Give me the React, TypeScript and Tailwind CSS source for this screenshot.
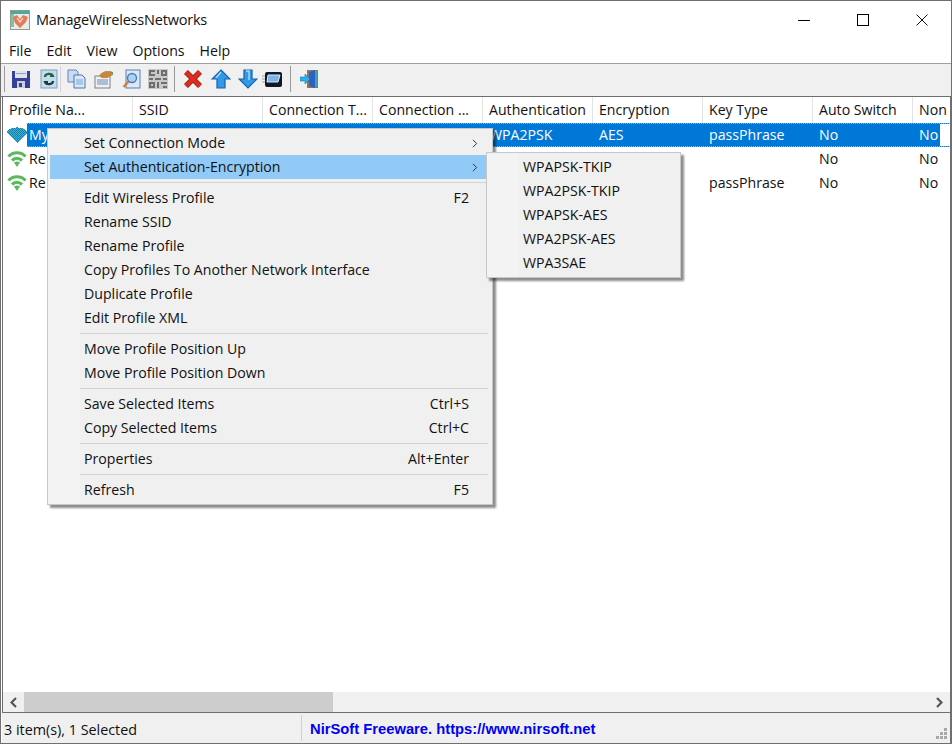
const columns = [
  { title: 'Profile Na...', width: 'w-[130px]' },
  { title: 'SSID', width: 'w-[130px]' },
  { title: 'Connection T...', width: 'w-[110px]' },
  { title: 'Connection ...', width: 'w-[110px]' },
  { title: 'Authentication', width: 'w-[110px]' },
  { title: 'Encryption', width: 'w-[110px]' },
  { title: 'Key Type', width: 'w-[110px]' },
  { title: 'Auto Switch', width: 'w-[100px]' },
  { title: 'Non', width: 'w-[60px]' },
];

const rows = [
  { name: 'My', auth: 'WPA2PSK', enc: 'AES', key: 'passPhrase', selected: true },
  { name: 'Re', auth: '', enc: '', key: '', selected: false },
  { name: 'Re', auth: '', enc: '', key: 'passPhrase', selected: false },
];

function Wifi({ selected }: { selected: boolean }) {
  if (selected) {
    return (
      <svg width="20" height="18" viewBox="0 0 20 18" shapeRendering="crispEdges">
        <defs>
          <pattern id="dith" width="2" height="2" patternUnits="userSpaceOnUse">
            <rect width="2" height="2" fill="#0a7ed6" />
            <rect width="1" height="1" fill="#4fb2a8" />
            <rect x="1" y="1" width="1" height="1" fill="#4fb2a8" />
          </pattern>
        </defs>
        <path d="M0 5 C5 0 15 0 20 5 L20 7 L10 17 L0 7 Z" fill="url(#dith)" />
      </svg>
    );
  }
  return (
    <svg width="20" height="18" viewBox="0 0 20 18" fill="none" stroke="#5cb85c" strokeWidth="3.2">
      <path d="M1.5 6.5 C6 1.5 14 1.5 18.5 6.5" />
      <path d="M5 10.5 C8 7.5 12 7.5 15 10.5" />
      <path d="M7 12.5 Q10 10.5 13 12.5 L10 17 Z" fill="#5cb85c" stroke="none" />
    </svg>
  );
}

function Logo() {
  return (
    <svg width="20" height="20" viewBox="0 0 20 20">
      <rect x="0.5" y="0.5" width="19" height="19" fill="#e6ece8" stroke="#8f9a96" />
      <rect x="1" y="1" width="18" height="3" fill="#4fa89c" />
      <rect x="1" y="4" width="3" height="13" fill="#7cc4a4" />
      <path d="M3 7 L7 5 L10 9 L13 5 L18 7 L16 12 L10 18 L5 13 Z" fill="#e8785a" />
      <path d="M7 8 L10 12 L13 8" fill="none" stroke="#f6d6b8" strokeWidth="1.4" />
    </svg>
  );
}

function Save() {
  return (
    <svg width="20" height="20" viewBox="0 0 20 20">
      <path d="M1 2 H19 V19 H1 Z" fill="#34409a" />
      <rect x="4" y="2" width="12" height="7" fill="#dfe3ea" />
      <rect x="5" y="4" width="10" height="1" fill="#9aa2b8" />
      <rect x="6" y="12" width="8" height="7" fill="#c9d0dc" />
      <rect x="8" y="14" width="3" height="4" fill="#34409a" />
    </svg>
  );
}

function Reload() {
  return (
    <svg width="18" height="20" viewBox="0 0 18 20">
      <rect x="1" y="1" width="16" height="18" fill="#c4dcf0" stroke="#7c9cc0" />
      <path d="M5 8 C5 4 12 4 13 7 L10 7" fill="none" stroke="#1d6a36" strokeWidth="2.2" />
      <path d="M13 12 C13 16 6 16 5 13 L8 13" fill="none" stroke="#1d3a36" strokeWidth="2.2" />
    </svg>
  );
}

function CopyIcon() {
  return (
    <svg width="19" height="20" viewBox="0 0 19 20">
      <path d="M1 1 H9 L11 3 V13 H1 Z" fill="#c8dcf4" stroke="#5f83bd" />
      <path d="M7 6 H15 L18 9 V19 H7 Z" fill="#d8e8f8" stroke="#4f74b0" />
      <path d="M9 11 H16 M9 13 H16 M9 15 H16" stroke="#7da6d8" />
    </svg>
  );
}

function Props() {
  return (
    <svg width="20" height="20" viewBox="0 0 20 20">
      <rect x="1" y="7" width="15" height="12" fill="#eef0f2" stroke="#7c8288" />
      <path d="M3 11 H14 M3 13 H14 M3 15 H14" stroke="#6a8bb8" />
      <path d="M5 7 C8 2 13 1 18 3 L19 6 L13 9 L8 9 Z" fill="#c9853a" />
      <path d="M15 2 L19 3 L19 6 Z" fill="#4ea85a" />
    </svg>
  );
}

function Find() {
  return (
    <svg width="19" height="20" viewBox="0 0 19 20">
      <rect x="4" y="1" width="14" height="18" fill="#dce8f6" stroke="#5a7fb8" />
      <circle cx="10" cy="9" r="4.5" fill="#a8d4f4" stroke="#4f79b8" strokeWidth="1.4" />
      <path d="M6.5 12.5 L1.5 18" stroke="#d08030" strokeWidth="2.4" />
    </svg>
  );
}

function Qr() {
  return (
    <svg width="20" height="20" viewBox="0 0 20 20" shapeRendering="crispEdges">
      <rect width="20" height="20" fill="#c8c8c8" />
      <path
        d="M1 1h6v2H3v2h4v2H1zM9 1h2v4H9zM13 1h6v6h-6zM15 3v2h2V3zM1 9h4v2H1zM7 9h6v2H7zM15 9h4v2h-4zM1 13h6v6H1zM3 15v2h2v-2zM9 13h2v6H9zM13 13h6v2h-6zM15 17h4v2h-4z"
        fill="#6e6e6e"
        fillRule="evenodd"
      />
    </svg>
  );
}

function Del() {
  return (
    <svg width="20" height="20" viewBox="0 0 20 20">
      <path d="M3 3 L17 17 M17 3 L3 17" stroke="#7a2a20" strokeWidth="5.6" />
      <path d="M3 3 L17 17 M17 3 L3 17" stroke="#e02a1c" strokeWidth="4" />
    </svg>
  );
}

function Arrow({ down }: { down?: boolean }) {
  return (
    <svg width="20" height="20" viewBox="0 0 20 20">
      <path
        d={down ? 'M6 1 H14 V10 H19 L10 19 L1 10 H6 Z' : 'M10 1 L19 10 H14 V19 H6 V10 H1 Z'}
        fill="#2f9be8"
        stroke="#1a5fa8"
        strokeWidth="1.2"
      />
      <path d={down ? 'M8 2 H11 V11' : 'M10 3 L5 9'} fill="none" stroke="#a5dcfa" strokeWidth="1.4" />
    </svg>
  );
}

function Card() {
  return (
    <svg width="21" height="20" viewBox="0 0 21 20">
      <path d="M0 7 H5 M0 10 H5 M0 13 H5" stroke="#9aa2aa" />
      <rect x="3" y="3" width="17" height="15" rx="2" fill="#101828" />
      <path d="M6 6 H18 L16 13 H5 Z" fill="#7db4e6" stroke="#d8ecfa" />
    </svg>
  );
}

function Exit() {
  return (
    <svg width="19" height="20" viewBox="0 0 19 20">
      <rect x="7" y="1" width="11" height="18" fill="#8a7a5a" />
      <path d="M9 3 L15 1 V19 L9 17 Z" fill="#2f5fc8" />
      <rect x="15" y="2" width="2" height="16" fill="#3fa8a0" />
      <path d="M0 8 H5 V5 L10 10 L5 15 V12 H0 Z" fill="#2bb0e8" stroke="#1878b0" strokeWidth="0.6" />
    </svg>
  );
}

function Chevron({ left, className }: { left?: boolean; className?: string }) {
  return (
    <svg className={className} width="7" height="11" viewBox="0 0 7 11" fill="none" stroke="currentColor" strokeWidth="1.2">
      <path d={left ? 'M6 1 L1.5 5.5 L6 10' : 'M1 1 L5.5 5.5 L1 10'} />
    </svg>
  );
}

function ToolSep({ light }: { light?: boolean }) {
  return <div className={light ? 'h-[26px] w-px bg-[#d4d4d4]' : 'h-[26px] w-px bg-[#9a9a9a]'} />;
}

function MenuItem({ label, shortcut, arrow, active }: { label: string; shortcut?: string; arrow?: boolean; active?: boolean }) {
  return (
    <div className={`flex h-6 items-center pl-[34px] pr-[21px] ${active ? 'bg-[#91c9f7]' : ''}`}>
      <span className="whitespace-nowrap">{label}</span>
      <span className="ml-auto">{shortcut}</span>
      {arrow && <Chevron className="ml-auto -mr-[9px] h-[9px] w-[6px] text-[#333]" />}
    </div>
  );
}

function MenuSep() {
  return (
    <div className="flex h-[7px] items-center pl-[30px] pr-0.5">
      <div className="h-px w-full bg-[#d2d2d2]" />
    </div>
  );
}

export default function App() {
  return (
    <div
      className="relative flex h-[744px] w-[952px] flex-col overflow-hidden border border-[#6f6f6f] bg-white text-[14.15px] leading-none text-[#111]"
      style={{ fontFamily: '"Open Sans", "Noto Sans", sans-serif' }}
    >
      <div className="flex h-[38px] shrink-0 items-center pl-[9px]">
        <Logo />
        <span className="ml-[6px] text-[14.5px] tracking-[-0.2px]">ManageWirelessNetworks</span>
        <div className="ml-auto flex h-full items-center">
          <div className="flex w-[60px] justify-center">
            <div className="h-px w-3 bg-black" />
          </div>
          <div className="flex w-[58px] justify-center">
            <div className="size-3 border border-black" />
          </div>
          <div className="flex w-[59px] justify-center">
            <svg width="12" height="12" viewBox="0 0 12 12" stroke="#111">
              <path d="M0.5 0.5 L11.5 11.5 M11.5 0.5 L0.5 11.5" />
            </svg>
          </div>
        </div>
      </div>

      <div className="flex h-[25px] shrink-0 items-center gap-[15px] border-b border-[#a0a0a0] pl-2">
        <span>File</span>
        <span>Edit</span>
        <span>View</span>
        <span>Options</span>
        <span>Help</span>
      </div>

      <div className="flex h-[33px] shrink-0 items-center border-b border-[#6f6f6f] bg-[#f0f0f0] pb-0.5 pl-[3px]">
        <ToolSep />
        <div className="ml-[6px]"><Save /></div>
        <div className="ml-[9px]"><Reload /></div>
        <div className="ml-[2px]"><ToolSep light /></div>
        <div className="ml-[6px]"><CopyIcon /></div>
        <div className="ml-[8px]"><Props /></div>
        <div className="ml-[8px]"><Find /></div>
        <div className="ml-[7px]"><Qr /></div>
        <div className="ml-[6px]"><ToolSep /></div>
        <div className="ml-[8px]"><Del /></div>
        <div className="ml-[8px]"><Arrow /></div>
        <div className="ml-[7px]"><Arrow down /></div>
        <div className="ml-[4px]"><Card /></div>
        <div className="ml-[7px]"><ToolSep /></div>
        <div className="ml-[9px]"><Exit /></div>
      </div>

      <div className="ml-px flex min-h-0 flex-1 flex-col border-x border-[#6f6f6f]">
        <div className="flex h-[26px] shrink-0 items-center overflow-hidden">
          {columns.map((col) => (
            <div key={col.title} className={`${col.width} flex h-full shrink-0 items-center border-r border-[#e3e3e3] pl-[6px] pt-px whitespace-nowrap`}>
              {col.title}
            </div>
          ))}
        </div>

        {rows.map((row, i) => (
          <div key={i} className="flex h-6 shrink-0 items-center">
            <div className="flex w-[24px] shrink-0 justify-end">
              <Wifi selected={row.selected} />
            </div>
            <div
              className={`flex h-full flex-1 items-center overflow-hidden ${
                row.selected ? 'border-y border-dotted border-[#e8a060] bg-[#0078d7] text-white' : ''
              }`}
            >
              <span className="w-[106px] shrink-0 pl-0.5">{row.name}</span>
              <span className="w-[350px] shrink-0" />
              <span className="w-[110px] shrink-0 pl-[6px]">{row.auth}</span>
              <span className="w-[110px] shrink-0 pl-[6px]">{row.enc}</span>
              <span className="w-[110px] shrink-0 pl-[6px]">{row.key}</span>
              <span className="w-[100px] shrink-0 pl-[6px]">No</span>
              <span className="w-[27px] shrink-0 pl-[6px]">No</span>
              {row.selected && <span className="h-full flex-1 bg-white" />}
            </div>
          </div>
        ))}

        <div className="mt-auto flex h-5 shrink-0 items-center bg-[#f0f0f0] text-[#555]">
          <div className="flex w-[21px] justify-center">
            <Chevron left className="[stroke-width:2.2]" />
          </div>
          <div className="h-full w-[309px] bg-[#cdcdcd]" />
          <div className="ml-auto flex w-[21px] justify-center">
            <Chevron className="[stroke-width:2.2]" />
          </div>
        </div>
      </div>

      <div className="ml-px flex h-[31px] shrink-0 items-center border-t border-r border-[#6f6f6f] bg-[#f0f0f0]">
        <span className="w-[299px] pl-0.5 pt-1 text-[14.35px]">3 item(s), 1 Selected</span>
        <div className="h-[26px] w-px bg-[#d0d0d0]" />
        <span
          className="ml-[8px] pt-[3px] text-[14.75px] font-bold text-[#0000f0]"
          style={{ fontFamily: '"Liberation Sans", sans-serif' }}
        >
          NirSoft Freeware. https://www.nirsoft.net
        </span>
        <svg className="ml-auto mr-0.5 mt-3" width="12" height="12" viewBox="0 0 12 12" fill="#a8a8a8">
          <rect x="8" y="0" width="3" height="3" />
          <rect x="4" y="4" width="3" height="3" />
          <rect x="8" y="4" width="3" height="3" />
          <rect x="0" y="8" width="3" height="3" />
          <rect x="4" y="8" width="3" height="3" />
          <rect x="8" y="8" width="3" height="3" />
        </svg>
      </div>

      <div className="absolute left-[46px] top-[127px] w-[446px] border border-[#c8c8c8] bg-[linear-gradient(to_right,#f3f3f3_32px,#f0f0f0_32px)] p-0.5 shadow-[3px_3px_2px_rgba(0,0,0,0.45)]">
        <MenuItem label="Set Connection Mode" arrow />
        <MenuItem label="Set Authentication-Encryption" arrow active />
        <MenuSep />
        <MenuItem label="Edit Wireless Profile" shortcut="F2" />
        <MenuItem label="Rename SSID" />
        <MenuItem label="Rename Profile" />
        <MenuItem label="Copy Profiles To Another Network Interface" />
        <MenuItem label="Duplicate Profile" />
        <MenuItem label="Edit Profile XML" />
        <MenuSep />
        <MenuItem label="Move Profile Position Up" />
        <MenuItem label="Move Profile Position Down" />
        <MenuSep />
        <MenuItem label="Save Selected Items" shortcut="Ctrl+S" />
        <MenuItem label="Copy Selected Items" shortcut="Ctrl+C" />
        <MenuSep />
        <MenuItem label="Properties" shortcut="Alt+Enter" />
        <MenuSep />
        <MenuItem label="Refresh" shortcut="F5" />
      </div>

      <div className="absolute left-[485px] top-[151px] w-[195px] border border-[#c8c8c8] bg-[linear-gradient(to_right,#f3f3f3_32px,#f0f0f0_32px)] p-0.5 shadow-[3px_3px_2px_rgba(0,0,0,0.45)]">
        <MenuItem label="WPAPSK-TKIP" />
        <MenuItem label="WPA2PSK-TKIP" />
        <MenuItem label="WPAPSK-AES" />
        <MenuItem label="WPA2PSK-AES" />
        <MenuItem label="WPA3SAE" />
      </div>
    </div>
  );
}
